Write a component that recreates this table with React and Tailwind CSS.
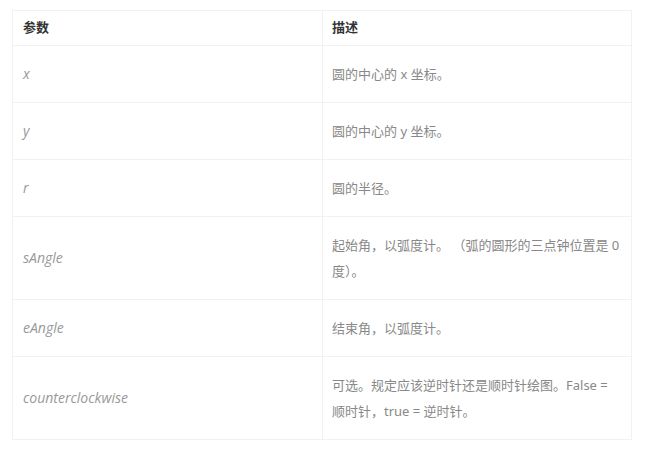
import React from "react";

const rows = [
  ["x", "圆的中心的 x 坐标。"],
  ["y", "圆的中心的 y 坐标。"],
  ["r", "圆的半径。"],
  ["sAngle", "起始角，以弧度计。 （弧的圆形的三点钟位置是 0 度）。"],
  ["eAngle", "结束角，以弧度计。"],
  ["counterclockwise", "可选。规定应该逆时针还是顺时针绘图。False = 顺时针，true = 逆时针。"],
];

export default function App() {
  return (
    <div
      className="w-[650px] h-[449px] bg-white pt-[10px] pl-[12px]"
      style={{ fontFamily: '"Noto Sans", "Noto Sans CJK SC", sans-serif' }}
    >
      <table className="w-[620px] border-collapse border border-[#f2f2f2] text-[13px]">
        <thead>
          <tr className="h-[35px]">
            <th className="w-[310px] border border-[#f2f2f2] px-[10px] text-left font-semibold text-[#333]">参数</th>
            <th className="border border-[#f2f2f2] px-[9px] text-left font-semibold text-[#333]">描述</th>
          </tr>
        </thead>
        <tbody>
          {rows.map(([p, d]) => (
            <tr key={p}>
              <td
                className="border border-[#f2f2f2] px-[10px] py-[15px] leading-[26px] italic text-[14px] text-[#999] align-middle"
                style={{ fontFamily: '"Open Sans", sans-serif' }}
              >
                {p}
              </td>
              <td className="border border-[#f2f2f2] px-[9px] py-[15px] leading-[26px] text-[#888] align-middle">{d}</td>
            </tr>
          ))}
        </tbody>
      </table>
    </div>
  );
}
